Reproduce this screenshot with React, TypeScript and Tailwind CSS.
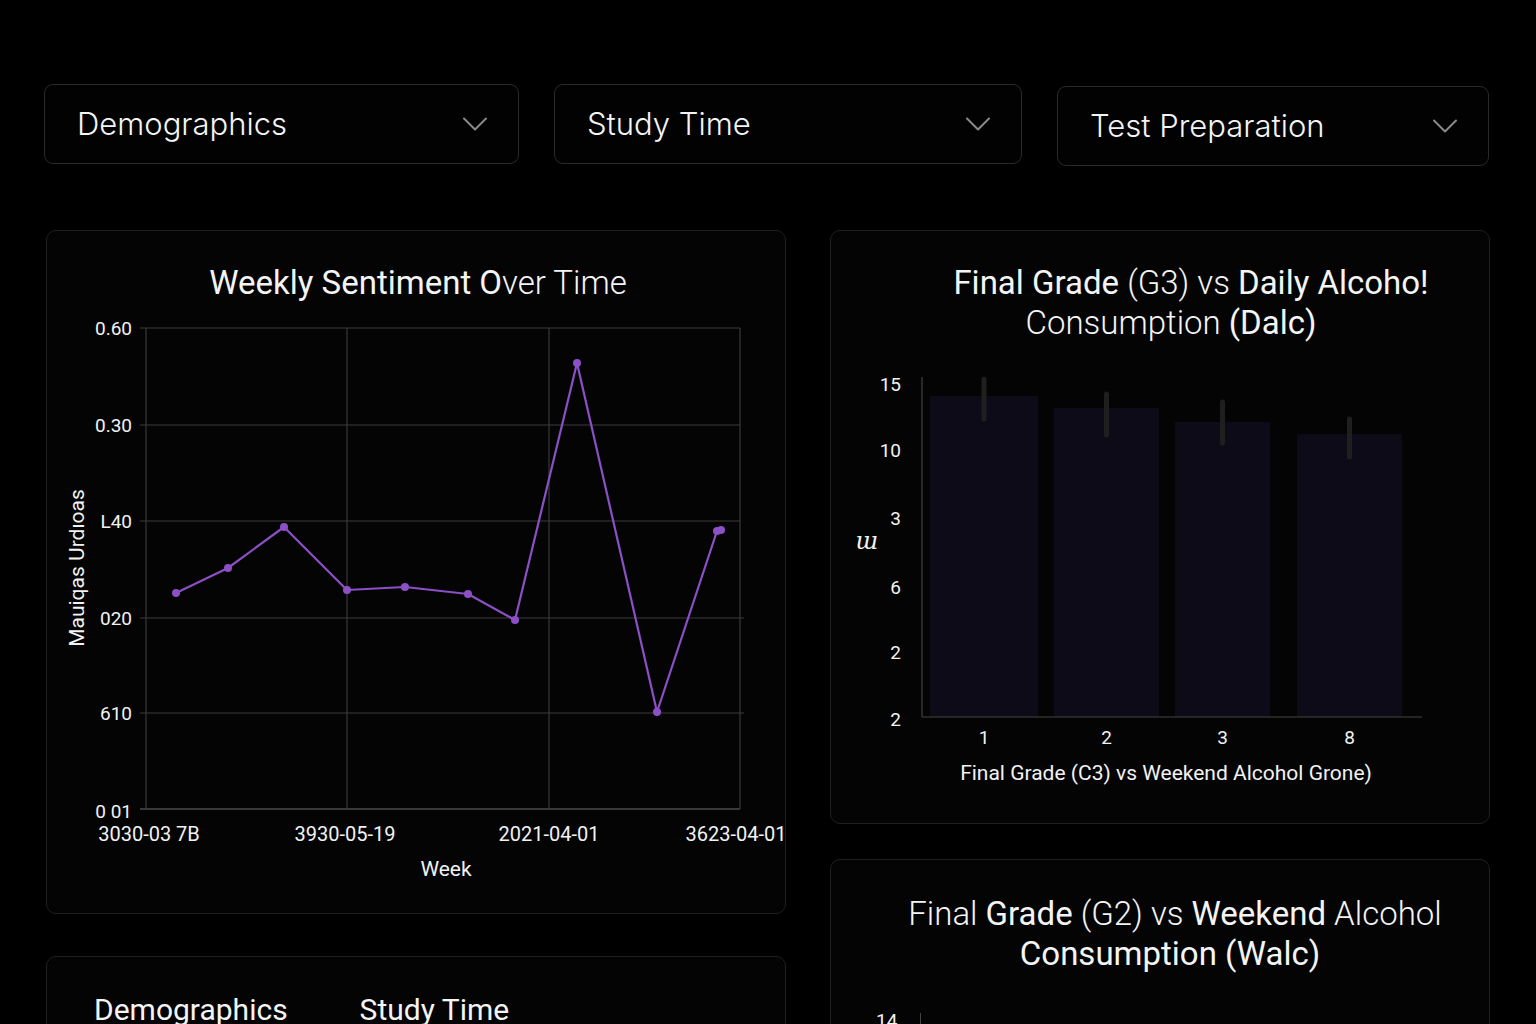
import React from 'react';
import { ChevronDown } from 'lucide-react';

const filters = [
  { name: "Demographics", w: "w-[475px]", extra: "" },
  { name: "Study Time", w: "w-[468px]", extra: "" },
  { name: "Test Preparation", w: "w-[432px]", extra: "mt-[2px]" },
];

// puntos de la serie semanal (coordenadas de la página)
const sentiment = [
  [175, 592], [227, 567], [283, 526], [346, 589], [404, 586], [467, 593],
  [514, 619], [576, 362], [656, 711], [716, 530], [720, 529],
];

const bars = [
  { x: 929, w: 108, top: 395, label: "1", err: [378, 418] },
  { x: 1053, w: 105, top: 407, label: "2", err: [393, 434] },
  { x: 1174, w: 95, top: 421, label: "3", err: [401, 442] },
  { x: 1296, w: 105, top: 433, label: "8", err: [418, 456] },
];

function SentimentChart() {
  const grid = "#3a3a3a";
  const yTicks = [
    { y: 327, t: "0.60", r: 739 },
    { y: 424, t: "0.30", r: 739 },
    { y: 520, t: "L40", r: 739 },
    { y: 617, t: "020", r: 743 },
    { y: 712, t: "610", r: 743 },
  ];
  const xTicks = [
    { x: 148, t: "3030-03 7B" },
    { x: 344, t: "3930-05-19" },
    { x: 548, t: "2021-04-01" },
    { x: 735, t: "3623-04-01" },
  ];
  const line = sentiment.map(([x, y]) => `${x},${y}`).join(" ");
  return (
    <svg width={740} height={590} viewBox="46 310 740 590" className="mt-[8px] block">
      <g fontFamily="Roboto, 'Liberation Sans', sans-serif" fill="#f2f2f2">
        {yTicks.map((t) => (
          <g key={t.y}>
            <line x1={139} x2={t.r} y1={t.y} y2={t.y} stroke={grid} strokeWidth={1.2} />
            <text x={131} y={t.y + 7} fontSize={19} textAnchor="end">{t.t}</text>
          </g>
        ))}
        <line x1={139} x2={739} y1={808} y2={808} stroke="#4a4a4a" strokeWidth={1.5} />
        <text x={131} y={817} fontSize={19} textAnchor="end">0 01</text>
        {[145, 346, 548, 739].map((x) => (
          <line key={x} x1={x} x2={x} y1={327} y2={808} stroke={grid} strokeWidth={1.2} />
        ))}
        {xTicks.map((t) => (
          <text key={t.x} x={t.x} y={840} fontSize={20} textAnchor="middle">{t.t}</text>
        ))}
        <text x={445} y={875} fontSize={21} textAnchor="middle">Week</text>
        <text x={76} y={567} fontSize={21} textAnchor="middle" transform="rotate(-90 76 567)" dy={7}>
          Mauiqas Urdıoas
        </text>
      </g>
      <polyline points={line} fill="none" stroke="#8c4fc6" strokeWidth={2.2} strokeLinejoin="round" />
      {sentiment.map(([x, y], i) => (
        <circle key={i} cx={x} cy={y} r={4} fill="#8c4fc6" />
      ))}
    </svg>
  );
}

function DalcChart() {
  const yTicks = [
    { y: 383, t: "15" },
    { y: 449, t: "10" },
    { y: 517, t: "3" },
    { y: 586, t: "6" },
    { y: 651, t: "2" },
    { y: 718, t: "2" },
  ];
  return (
    <svg width={660} height={450} viewBox="830 355 660 450" className="mt-[13px] block">
      <g fontFamily="Roboto, 'Liberation Sans', sans-serif" fill="#f2f2f2">
        {bars.map((b) => (
          <g key={b.x}>
            <rect x={b.x} y={b.top} width={b.w} height={716 - b.top} fill="#0d0b17" />
            <line x1={b.x + b.w / 2} x2={b.x + b.w / 2} y1={b.err[0]} y2={b.err[1]} stroke="#1f1f1f" strokeWidth={5} strokeLinecap="round" />
            <text x={b.x + b.w / 2} y={743} fontSize={19} textAnchor="middle">{b.label}</text>
          </g>
        ))}
        <line x1={921} x2={921} y1={376} y2={716} stroke="#444" strokeWidth={1.2} />
        <line x1={921} x2={1421} y1={716} y2={716} stroke="#444" strokeWidth={1.2} />
        {yTicks.map((t) => (
          <text key={t.y} x={900} y={t.y + 7} fontSize={19} textAnchor="end">{t.t}</text>
        ))}
        <text x={866} y={548} fontSize={24} textAnchor="middle" fontStyle="italic" fontFamily="'DejaVu Serif', serif">ɯ</text>
        <text x={1165} y={779} fontSize={21} textAnchor="middle">Final Grade (C3) vs Weekend Alcohol Grone)</text>
      </g>
    </svg>
  );
}

export default function App() {
  return (
    <div className="h-[1024px] w-full overflow-hidden bg-black text-[#f4f4f4] font-['Roboto',_sans-serif]">
      {/* FILTROS */}
      <div className="flex items-start gap-[35px] pl-[44px] pt-[84px]">
        {filters.map((f) => (
          <button
            key={f.name}
            className={`${f.w} ${f.extra} h-[80px] flex items-center justify-between pl-[32px] pr-[21px] rounded-[9px] border border-[#2a2a2a] bg-[#020202]`}
          >
            <span className="font-['Inter',_sans-serif] font-light text-[31px] text-[#f4f4f4]">{f.name}</span>
            <ChevronDown size={44} strokeWidth={1.1} className="text-[#8a8a8a]" />
          </button>
        ))}
      </div>

      {/* GRAFICOS */}
      <div className="flex gap-[44px] pl-[46px] pt-[64px]">
        <div className="w-[740px] flex flex-col gap-[42px]">
          <div className="h-[684px] rounded-[10px] border border-[#1f1f1f] bg-[#040404] pt-[32px]">
            <h2 className="text-center text-[33px] leading-[40px] pl-[4px]">
              <span className="font-normal">Weekly Sentiment O</span>
              <span className="font-light">ver Time</span>
            </h2>
            <SentimentChart />
          </div>
          <div className="h-[200px] rounded-[10px] border border-[#1f1f1f] bg-[#040404] pt-[33px] px-[47px]">
            <div className="flex gap-[72px] text-[30px] leading-[40px]">
              <span>Demographics</span>
              <span>Study Time</span>
            </div>
          </div>
        </div>

        <div className="w-[660px] flex flex-col gap-[35px]">
          <div className="h-[594px] rounded-[10px] border border-[#1f1f1f] bg-[#040404] pt-[32px]">
            <h2 className="text-center text-[33px] leading-[40px] pl-[62px]">
              <div>
                <span className="font-normal">Final Grade</span>
                <span className="font-light"> (G3) vs </span>
                <span className="font-normal">Daily Alcoho!</span>
              </div>
              <div className="pr-[40px]">
                <span className="font-light">Consumption </span>
                <span className="font-normal">(Dalc)</span>
              </div>
            </h2>
            <DalcChart />
          </div>
          <div className="h-[300px] rounded-[10px] border border-[#1f1f1f] bg-[#040404] pt-[34px]">
            <h2 className="text-center text-[33px] leading-[40px] pl-[30px]">
              <div>
                <span className="font-light">Final </span>
                <span className="font-normal">Grade</span>
                <span className="font-light"> (G2) vs </span>
                <span className="font-normal">Weekend</span>
                <span className="font-light"> Alcohol</span>
              </div>
              <div className="font-normal pr-[10px]">Consumption (Walc)</div>
            </h2>
            <div className="flex items-start pl-[45px] pt-[37px]">
              <span className="text-[19px] leading-[20px] w-[44px]">14</span>
              <div className="w-px h-[40px] bg-[#444] mt-[2px]" />
            </div>
          </div>
        </div>
      </div>
    </div>
  );
}
